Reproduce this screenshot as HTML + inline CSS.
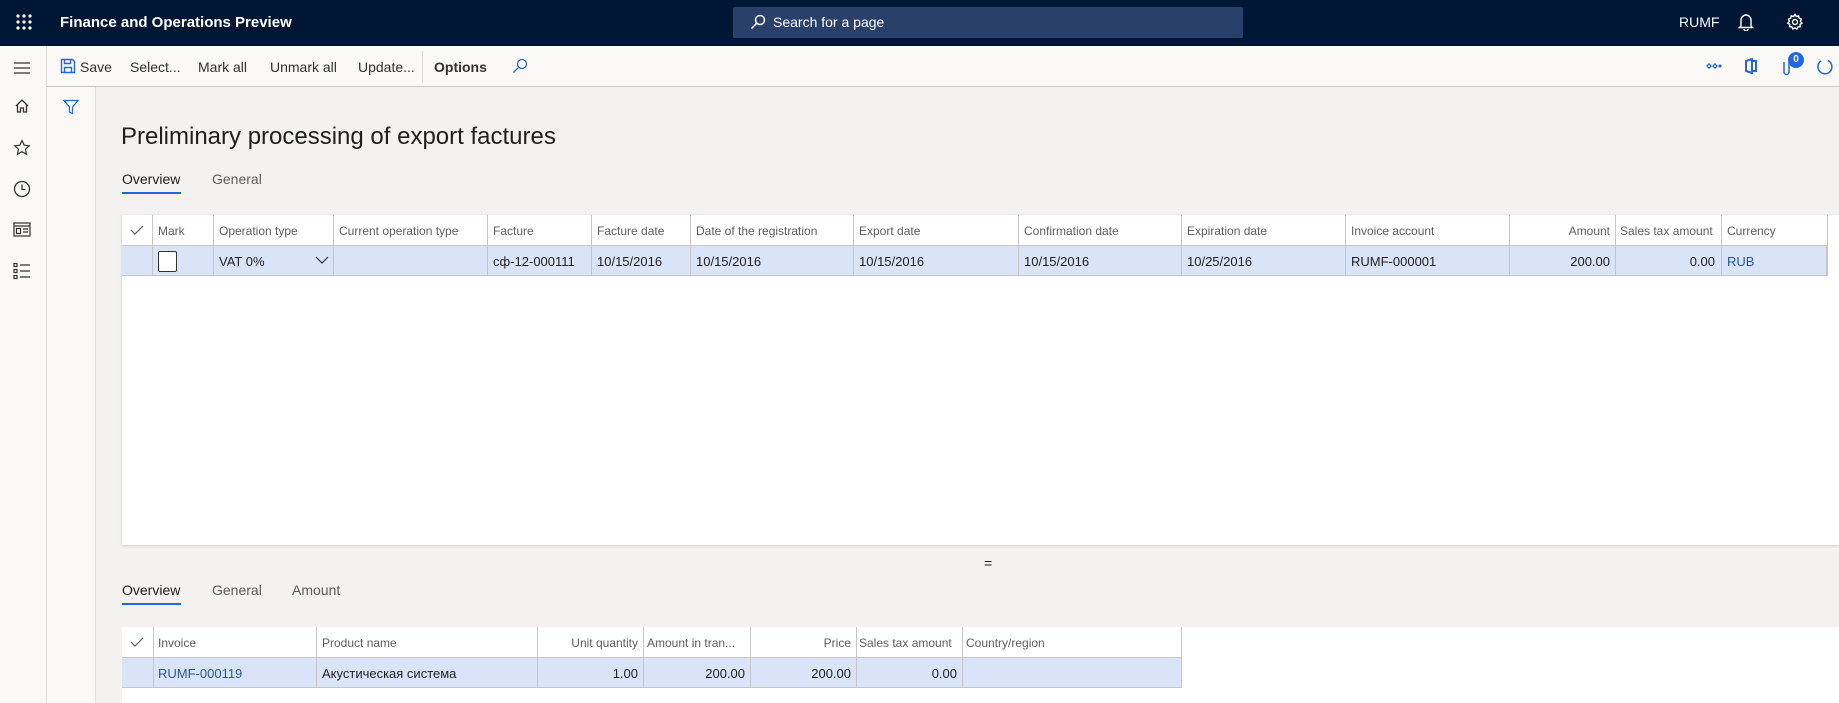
<!DOCTYPE html>
<html><head><meta charset="utf-8"><style>
*{box-sizing:border-box;margin:0;padding:0}
body{width:1839px;height:703px;overflow:hidden;background:#f3f2f1;font-family:"Liberation Sans","Noto Sans CJK SC",sans-serif;color:#201f1e;position:relative}
.abs{position:absolute}
.hdr{left:0;top:0;width:1839px;height:46px;background:#001635;color:#fff}
.tb{left:47px;top:46px;width:1792px;height:41px;background:#faf9f8;border-bottom:1px solid #c8c6c4}
.nav{left:0;top:46px;width:47px;height:657px;background:#faf9f8;border-right:1px solid #e1dfdd}
.fp{left:47px;top:87px;width:49px;height:616px;background:#faf9f8;border-right:1px solid #e1dfdd}
.tbi{top:59px;font-size:14px;color:#323130}
.grid{background:#fff}
.c{position:absolute;font-size:12px;color:#605e5c;white-space:nowrap;overflow:hidden}
.d{position:absolute;font-size:13px;color:#201f1e;white-space:nowrap}
.vl{position:absolute;width:1px;background:#c8c6c4}
.link{color:#2b5797}
</style></head><body>
<div class="abs hdr">
 <svg class="abs" style="left:15px;top:13px" width="18" height="18" viewBox="0 0 18 18" fill="#fff"><g><circle cx="3" cy="3" r="1.6"/><circle cx="9" cy="3" r="1.6"/><circle cx="15" cy="3" r="1.6"/><circle cx="3" cy="9" r="1.6"/><circle cx="9" cy="9" r="1.6"/><circle cx="15" cy="9" r="1.6"/><circle cx="3" cy="15" r="1.6"/><circle cx="9" cy="15" r="1.6"/><circle cx="15" cy="15" r="1.6"/></g></svg>
 <div class="abs" style="left:60px;top:14px;font-size:15px;font-weight:bold">Finance and Operations Preview</div>
 <div class="abs" style="left:733px;top:7px;width:510px;height:31px;background:#29406a;border-radius:2px"></div>
 <svg class="abs" style="left:750px;top:14px" width="16" height="16" viewBox="0 0 16 16" fill="none" stroke="#fff" stroke-width="1.5"><circle cx="10" cy="6" r="4.5"/><path d="M6.8 9.2L1.5 14.5"/></svg>
 <div class="abs" style="left:773px;top:14px;font-size:14px">Search for a page</div>
 <div class="abs" style="left:1679px;top:14px;font-size:14px">RUMF</div>
 <svg class="abs" style="left:1738px;top:13px" width="16" height="18" viewBox="0 0 16 18" fill="none" stroke="#fff" stroke-width="1.4"><path d="M3 13V7a5 5 0 0110 0v6l1.5 1.5h-13z"/><path d="M6 16a2 2 0 004 0"/></svg>
 <svg class="abs" style="left:1786px;top:13px" width="18" height="18" viewBox="0 0 18 18" fill="none" stroke="#fff" stroke-width="1.4"><circle cx="9" cy="9" r="2.5"/><path d="M9 1.5l1.3 2 2.3-.6.5 2.3 2.2.9-.9 2.2 1.6 1.8-2 1.3.3 2.3-2.4.2-1 2.1-2-1.2-2 1.2-1-2.1-2.4-.2.3-2.3-2-1.3 1.6-1.8-.9-2.2 2.2-.9.5-2.3 2.3.6z"/></svg>
</div>
<div class="abs nav">
 <svg class="abs" style="left:13px;top:15px" width="18" height="14" stroke="#323130" stroke-width="1.3"><path d="M1 2h16M1 7h16M1 12h16"/></svg>
 <svg class="abs" style="left:14px;top:52px" width="16" height="16" fill="none" stroke="#323130" stroke-width="1.3"><path d="M2 8L8 2l6 6M3.5 6.5V14h3v-4h3v4h3V6.5"/></svg>
 <svg class="abs" style="left:13px;top:93px" width="18" height="18" fill="none" stroke="#323130" stroke-width="1.2"><path d="M9 1.5l2.2 4.7 5 .6-3.7 3.4 1 5-4.5-2.5-4.5 2.5 1-5-3.7-3.4 5-.6z"/></svg>
 <svg class="abs" style="left:13px;top:134px" width="18" height="18" fill="none" stroke="#323130" stroke-width="1.3"><circle cx="9" cy="9" r="7.5"/><path d="M9 4.5V9.5h3.5"/></svg>
 <svg class="abs" style="left:13px;top:176px" width="18" height="16" fill="none" stroke="#323130" stroke-width="1.2"><rect x="1" y="1" width="16" height="13"/><path d="M1 4h16M3.5 6.5h4v5h-4zM10 7h5M10 10h5"/></svg>
 <svg class="abs" style="left:13px;top:216px" width="18" height="18" fill="none" stroke="#323130" stroke-width="1.2"><rect x="1" y="1.5" width="3" height="3"/><rect x="1" y="7.5" width="3" height="3"/><rect x="1" y="13.5" width="3" height="3"/><path d="M7 3h10M7 9h10M7 15h10"/></svg>
</div>
<div class="abs tb"></div>
<svg class="abs" style="left:60px;top:58px" width="16" height="16" fill="none" stroke="#2266e3" stroke-width="1.4"><path d="M1.5 1.5h11l2 2v11h-13z"/><path d="M4.5 1.5v4h6v-4M4.5 14.5v-5h7v5"/></svg>
<div class="abs tbi" style="left:80px">Save</div>
<div class="abs tbi" style="left:130px">Select...</div>
<div class="abs tbi" style="left:198px">Mark all</div>
<div class="abs tbi" style="left:270px">Unmark all</div>
<div class="abs tbi" style="left:358px">Update...</div>
<div class="abs" style="left:422px;top:51px;width:1px;height:32px;background:#e1dfdd"></div>
<div class="abs tbi" style="left:434px;font-weight:bold">Options</div>
<svg class="abs" style="left:512px;top:58px" width="16" height="16" fill="none" stroke="#2266e3" stroke-width="1.3"><circle cx="10" cy="6" r="4.5"/><path d="M6.8 9.2L1.5 14.5"/></svg>
<svg class="abs" style="left:1706px;top:61px" width="16" height="10" fill="#2266e3"><path d="M0 5l3-3 3 3-3 3zM6 5l3-3 3 3-3 3zM12 5l2-2 2 2-2 2z"/><circle cx="3" cy="5" r="1" fill="#fff"/><circle cx="9" cy="5" r="1" fill="#fff"/></svg>
<svg class="abs" style="left:1744px;top:58px" width="14" height="16" fill="none" stroke="#2266e3" stroke-width="2"><path d="M2 3l6-2v14l-6-2zM8 3h4v10H8"/></svg>
<svg class="abs" style="left:1782px;top:58px" width="10" height="18" fill="none" stroke="#2266e3" stroke-width="1.5"><path d="M7 4v10a2.5 2.5 0 01-5 0V4"/></svg>
<div class="abs" style="left:1788px;top:52px;width:16px;height:16px;border-radius:50%;background:#2266e3;color:#fff;font-size:10px;font-weight:bold;text-align:center;line-height:16px">0</div>
<svg class="abs" style="left:1816px;top:58px" width="18" height="18" fill="none" stroke="#2266e3" stroke-width="1.5"><path d="M12 2.5A7 7 0 1 1 5 3"/></svg>
<div class="abs fp"></div>
<svg class="abs" style="left:63px;top:99px" width="16" height="16" fill="none" stroke="#2266e3" stroke-width="1.2"><path d="M1 1.5h14L9.5 8v6.5l-3-1.5V8z"/></svg>
<div class="abs" style="left:121px;top:123px;font-size:24px;color:#201f1e">Preliminary processing of export factures</div>
<div class="abs" style="left:122px;top:171px;font-size:14px">Overview</div>
<div class="abs" style="left:212px;top:171px;font-size:14px;color:#605e5c">General</div>
<div class="abs" style="left:122px;top:192px;width:59px;height:2px;background:#2266e3"></div>
<div class="abs grid" style="left:122px;top:215px;width:1717px;height:330px;box-shadow:0 1px 3px rgba(0,0,0,.15)"></div>
<div class="abs" style="left:122px;top:245px;width:1705px;height:31px;background:#d9e4f8;border-top:1px solid #c8c6c4;border-bottom:1px solid #c8c6c4;border-right:1px solid #c8c6c4"></div>
<svg class="abs" style="left:130px;top:224px" width="14" height="12" fill="none" stroke="#605e5c" stroke-width="1.2"><path d="M1 6l4 4 8-8"/></svg>
<div class="vl" style="left:152px;top:215px;height:61px"></div>
<div class="vl" style="left:213px;top:215px;height:61px"></div>
<div class="vl" style="left:333px;top:215px;height:61px"></div>
<div class="vl" style="left:487px;top:215px;height:61px"></div>
<div class="vl" style="left:591px;top:215px;height:61px"></div>
<div class="vl" style="left:690px;top:215px;height:61px"></div>
<div class="vl" style="left:853px;top:215px;height:61px"></div>
<div class="vl" style="left:1018px;top:215px;height:61px"></div>
<div class="vl" style="left:1181px;top:215px;height:61px"></div>
<div class="vl" style="left:1345px;top:215px;height:61px"></div>
<div class="vl" style="left:1509px;top:215px;height:61px"></div>
<div class="vl" style="left:1615px;top:215px;height:61px"></div>
<div class="vl" style="left:1721px;top:215px;height:61px"></div>
<div class="vl" style="left:1827px;top:215px;height:61px"></div>
<div class="c" style="left:158px;top:224px">Mark</div>
<div class="c" style="left:219px;top:224px">Operation type</div>
<div class="c" style="left:339px;top:224px">Current operation type</div>
<div class="c" style="left:493px;top:224px">Facture</div>
<div class="c" style="left:597px;top:224px">Facture date</div>
<div class="c" style="left:696px;top:224px">Date of the registration</div>
<div class="c" style="left:859px;top:224px">Export date</div>
<div class="c" style="left:1024px;top:224px">Confirmation date</div>
<div class="c" style="left:1187px;top:224px">Expiration date</div>
<div class="c" style="left:1351px;top:224px">Invoice account</div>
<div class="c" style="left:1515px;top:224px;width:95px;text-align:right">Amount</div>
<div class="c" style="left:1620px;top:224px">Sales tax amount</div>
<div class="c" style="left:1727px;top:224px">Currency</div>
<div class="abs" style="left:158px;top:251px;width:19px;height:21px;border:1px solid #323130;background:#fff;border-radius:2px"></div>
<div class="d" style="left:219px;top:254px">VAT 0%</div>
<svg class="abs" style="left:315px;top:256px" width="14" height="9" fill="none" stroke="#323130" stroke-width="1.2"><path d="M1 1l6 6 6-6"/></svg>
<div class="d" style="left:493px;top:254px">сф-12-000111</div>
<div class="d" style="left:597px;top:254px">10/15/2016</div>
<div class="d" style="left:696px;top:254px">10/15/2016</div>
<div class="d" style="left:859px;top:254px">10/15/2016</div>
<div class="d" style="left:1024px;top:254px">10/15/2016</div>
<div class="d" style="left:1187px;top:254px">10/25/2016</div>
<div class="d" style="left:1351px;top:254px">RUMF-000001</div>
<div class="d" style="left:1515px;top:254px;width:95px;text-align:right">200.00</div>
<div class="d" style="left:1620px;top:254px;width:95px;text-align:right">0.00</div>
<div class="d link" style="left:1727px;top:254px">RUB</div>
<div class="abs" style="left:984px;top:555px;font-size:14px">=</div>
<div class="abs" style="left:122px;top:582px;font-size:14px">Overview</div>
<div class="abs" style="left:212px;top:582px;font-size:14px;color:#605e5c">General</div>
<div class="abs" style="left:292px;top:582px;font-size:14px;color:#605e5c">Amount</div>
<div class="abs" style="left:122px;top:603px;width:59px;height:2px;background:#2266e3"></div>
<div class="abs grid" style="left:122px;top:627px;width:1717px;height:76px"></div>
<div class="abs" style="left:122px;top:657px;width:1060px;height:31px;background:#d9e4f8;border-top:1px solid #c8c6c4;border-bottom:1px solid #c8c6c4;border-right:1px solid #c8c6c4"></div>
<svg class="abs" style="left:130px;top:636px" width="14" height="12" fill="none" stroke="#605e5c" stroke-width="1.2"><path d="M1 6l4 4 8-8"/></svg>
<div class="vl" style="left:153px;top:627px;height:61px"></div>
<div class="vl" style="left:316px;top:627px;height:61px"></div>
<div class="vl" style="left:537px;top:627px;height:61px"></div>
<div class="vl" style="left:643px;top:627px;height:61px"></div>
<div class="vl" style="left:750px;top:627px;height:61px"></div>
<div class="vl" style="left:856px;top:627px;height:61px"></div>
<div class="vl" style="left:962px;top:627px;height:61px"></div>
<div class="vl" style="left:1181px;top:627px;height:61px"></div>
<div class="c" style="left:158px;top:636px">Invoice</div>
<div class="c" style="left:322px;top:636px">Product name</div>
<div class="c" style="left:540px;top:636px;width:98px;text-align:right">Unit quantity</div>
<div class="c" style="left:647px;top:636px;width:99px">Amount in tran...</div>
<div class="c" style="left:753px;top:636px;width:98px;text-align:right">Price</div>
<div class="c" style="left:859px;top:636px;width:100px">Sales tax amount</div>
<div class="c" style="left:966px;top:636px">Country/region</div>
<div class="d link" style="left:158px;top:666px">RUMF-000119</div>
<div class="d" style="left:322px;top:666px">Акустическая система</div>
<div class="d" style="left:540px;top:666px;width:98px;text-align:right">1.00</div>
<div class="d" style="left:646px;top:666px;width:99px;text-align:right">200.00</div>
<div class="d" style="left:753px;top:666px;width:98px;text-align:right">200.00</div>
<div class="d" style="left:859px;top:666px;width:98px;text-align:right">0.00</div>
</body></html>
